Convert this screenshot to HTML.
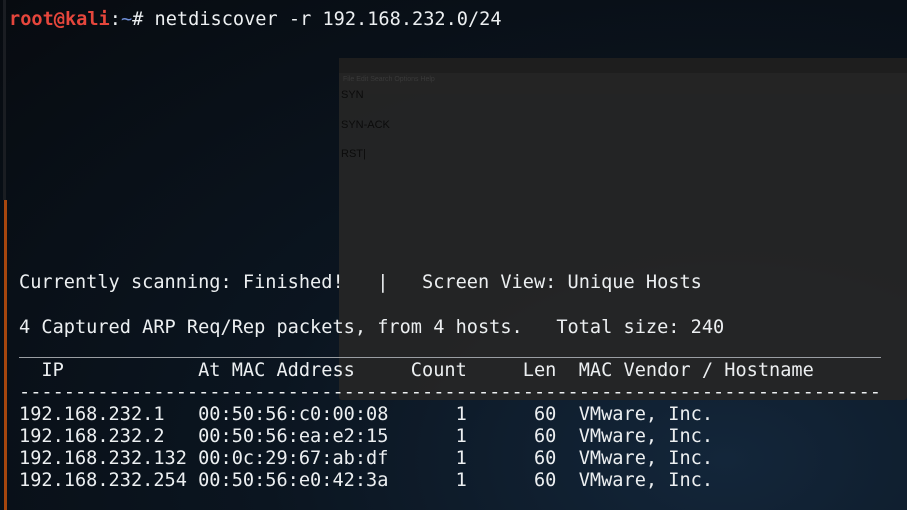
<!DOCTYPE html>
<html><head><meta charset="utf-8"><style>
html,body{margin:0;padding:0}
body{width:907px;height:510px;overflow:hidden;position:relative;
background:radial-gradient(ellipse at 80% 90%,#13263a 0%,#0b1520 45%,#070b10 100%);
font-family:"DejaVu Sans Mono","Liberation Mono",monospace;font-size:18.6px;color:#eceff1}
.l{position:absolute;white-space:pre;line-height:22px;left:19px}
.win{position:absolute;left:339px;top:58px;width:568px;height:342px;background:rgba(38,38,38,0.93);border-radius:3px}
.wt{position:absolute;left:0;top:0;width:100%;height:15px;background:#1e1e1e}
.wm{position:absolute;left:0;top:15px;width:100%;height:21px;background:#242424;font:7px "Liberation Sans",sans-serif;color:#3a3a3a;line-height:14px;padding-left:4px}
.wx{position:absolute;font:11px "Liberation Sans",sans-serif;color:#0b0b0b;left:2px}
</style></head><body>
<div style="position:absolute;left:3px;top:0;width:3px;height:200px;background:#1a1d22"></div>
<div style="position:absolute;left:4px;top:200px;width:3px;height:310px;background:#a6460e"></div>
<div class="win"><div class="wt"></div><div class="wm">File  Edit  Search  Options  Help</div>
<div class="wx" style="top:31px">SYN</div>
<div class="wx" style="top:61px">SYN-ACK</div>
<div class="wx" style="top:90px">RST|</div>
</div>
<div class="l" style="left:9px;top:9px"><span style="color:#e5463c;font-weight:bold">root@kali</span>:<span style="color:#6f8fd8">~</span># netdiscover -r 192.168.232.0/24</div>
<div class="l" style="top:272px">Currently scanning: Finished!   |   Screen View: Unique Hosts</div>
<div class="l" style="top:317px">4 Captured ARP Req/Rep packets, from 4 hosts.   Total size: 240</div>
<div style="position:absolute;left:19px;top:357px;width:862px;height:1px;background:#9a9ea3"></div>
<div class="l" style="top:360px">  IP            At MAC Address     Count     Len  MAC Vendor / Hostname</div>
<div class="l" style="top:382px">-----------------------------------------------------------------------------</div>
<div class="l" style="top:404px">192.168.232.1   00:50:56:c0:00:08      1      60  VMware, Inc.
192.168.232.2   00:50:56:ea:e2:15      1      60  VMware, Inc.
192.168.232.132 00:0c:29:67:ab:df      1      60  VMware, Inc.
192.168.232.254 00:50:56:e0:42:3a      1      60  VMware, Inc.</div>
</body></html>
